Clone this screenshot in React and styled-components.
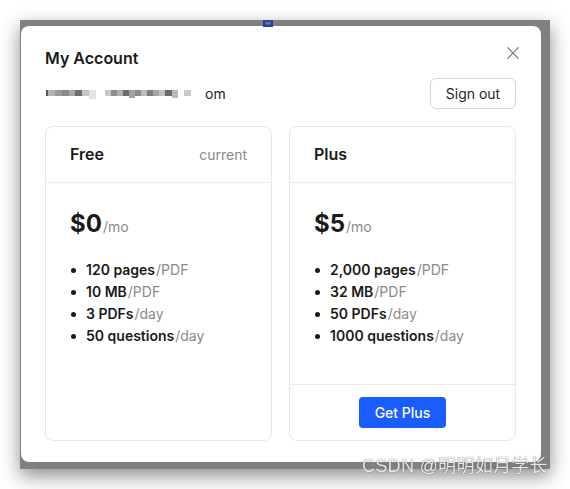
import React from 'react';
import styled, { createGlobalStyle } from 'styled-components';

const GlobalStyle = createGlobalStyle`
  html, body {
    margin: 0;
    padding: 0;
    background: #ffffff;
  }
  body {
    font-family: Inter, "Noto Sans", "Liberation Sans", sans-serif;
    color: #1f1f1f;
    -webkit-font-smoothing: antialiased;
  }
`;

const plans = [
  {
    name: 'Free',
    tag: 'current',
    price: '$0',
    features: [
      ['120 pages', '/PDF'],
      ['10 MB', '/PDF'],
      ['3 PDFs', '/day'],
      ['50 questions', '/day'],
    ],
  },
  {
    name: 'Plus',
    price: '$5',
    action: 'Get Plus',
    features: [
      ['2,000 pages', '/PDF'],
      ['32 MB', '/PDF'],
      ['50 PDFs', '/day'],
      ['1000 questions', '/day'],
    ],
  },
];

// pixelated (redacted) part of the email address
const redacted = [
  [2, '#5a5a5a'], [7, '#b4b4b4'], [7, '#9a9a9a'], [7, '#8a8a8a'], [6, '#a8a8a8'],
  [7, '#6e6e6e'], [7, '#c4c4c4'], [7, '#e2e2e2', 3], [9, 'transparent'],
  [6, '#c6c6c6'], [6, '#8e8e8e'], [6, '#b0b0b0'], [6, '#6c6c6c'], [6, '#a2a2a2', 2],
  [6, '#8a8a8a'], [6, '#bcbcbc'], [6, '#7c7c7c'], [6, '#a6a6a6'], [6, '#c2c2c2'],
  [7, '#6a6a6a'], [6, '#b8b8b8', 2], [6, 'transparent'], [7, '#cacaca'],
];

const X = () => (
  <svg width="12" height="12" viewBox="0 0 12 12">
    <path d="M0.8 0.8 L11.2 11.2 M11.2 0.8 L0.8 11.2" stroke="#8c8c8c" strokeWidth="1.4" strokeLinecap="round" />
  </svg>
);

export default function App() {
  return (
    <Stage>
      <GlobalStyle />
      <Backdrop>
        <BehindLogo width="10" height="7" viewBox="0 0 10 7">
          <path d="M1.2 0 V5.8 H8.8 V0 M3.2 0 Q5 3 6.8 0" stroke="#1f44a6" strokeWidth="2.4" fill="none" />
        </BehindLogo>
        <Modal>
          <TitleRow>
            <Title>My Account</Title>
            <CloseButton aria-label="close">
              <X />
            </CloseButton>
          </TitleRow>
          <AccountRow>
            <Email>
              <Redacted>
                {redacted.map(([w, c, drop], i) => (
                  <Cell key={i} style={{ width: w, background: c, height: 6 + (drop || 0) }} />
                ))}
              </Redacted>
              om
            </Email>
            <OutlineButton>Sign out</OutlineButton>
          </AccountRow>
          <Plans>
            {plans.map(plan => (
              <Card key={plan.name}>
                <CardHeader>
                  <PlanName>{plan.name}</PlanName>
                  {plan.tag && <PlanTag>{plan.tag}</PlanTag>}
                </CardHeader>
                <CardBody>
                  <Price>
                    {plan.price}
                    <Unit>/mo</Unit>
                  </Price>
                  <Features>
                    {plan.features.map(([strong, unit]) => (
                      <Feature key={strong}>
                        <b>{strong}</b>
                        <Unit>{unit}</Unit>
                      </Feature>
                    ))}
                  </Features>
                </CardBody>
                {plan.action && (
                  <CardFooter>
                    <PrimaryButton>{plan.action}</PrimaryButton>
                  </CardFooter>
                )}
              </Card>
            ))}
          </Plans>
        </Modal>
      </Backdrop>
      <Watermark>CSDN @明明如月学长</Watermark>
    </Stage>
  );
}

const Stage = styled.div`
  position: relative;
  width: 570px;
  height: 489px;
  padding: 20px;
  box-sizing: border-box;
`;

const Backdrop = styled.div`
  position: relative;
  width: 530px;
  height: 449px;
  box-sizing: border-box;
  padding: 6px 9px 7px 1px;
  background: #808080;
  box-shadow: 0 7px 18px rgba(0, 0, 0, 0.45);
`;

const BehindLogo = styled.svg`
  position: absolute;
  left: 243px;
  top: 0;
  display: block;
`;

const Modal = styled.div`
  height: 100%;
  box-sizing: border-box;
  background: #ffffff;
  border-radius: 8px;
  padding: 20px 25px 21px 24px;
  display: flex;
  flex-direction: column;
`;

const TitleRow = styled.div`
  display: flex;
  justify-content: space-between;
  align-items: flex-start;
`;

const Title = styled.div`
  font-size: 16px;
  line-height: 24px;
  font-weight: 600;
  color: #1a1a1a;
`;

const CloseButton = styled.button`
  border: none;
  background: none;
  padding: 0;
  margin: 1px -3px 0 0;
  width: 12px;
  height: 12px;
  display: flex;
  cursor: pointer;
`;

const AccountRow = styled.div`
  margin-top: 8px;
  display: flex;
  justify-content: space-between;
  align-items: center;
`;

const Email = styled.div`
  display: flex;
  align-items: center;
  font-size: 14px;
  line-height: 20px;
  color: #222;
`;

const Redacted = styled.div`
  display: flex;
  align-items: flex-start;
  height: 9px;
  margin: 2px 14px 0 1px;
`;

const Cell = styled.span`
  display: block;
`;

const OutlineButton = styled.button`
  font-family: inherit;
  font-size: 14px;
  color: #1f1f1f;
  background: #fff;
  border: 1px solid #d6d6d6;
  border-radius: 6px;
  height: 31px;
  width: 86px;
  padding: 0;
  cursor: pointer;
`;

const Plans = styled.div`
  margin-top: 17px;
  flex: 1;
  display: grid;
  grid-template-columns: 1fr 1fr;
  gap: 17px;
`;

const Card = styled.div`
  border: 1px solid #e8e8e8;
  border-radius: 8px;
  display: flex;
  flex-direction: column;
`;

const CardHeader = styled.div`
  display: flex;
  justify-content: space-between;
  align-items: center;
  padding: 15px 24px 16px;
  border-bottom: 1px solid #ebebeb;
`;

const PlanName = styled.div`
  font-size: 16px;
  line-height: 24px;
  font-weight: 600;
  color: #1a1a1a;
`;

const PlanTag = styled.div`
  font-size: 14px;
  color: #8a8a8a;
`;

const CardBody = styled.div`
  flex: 1;
  padding: 25px 24px 0;
`;

const Price = styled.div`
  font-size: 24px;
  line-height: 32px;
  font-weight: 700;
  color: #1a1a1a;
  display: flex;
  align-items: baseline;
`;

const Unit = styled.span`
  font-size: 14px;
  font-weight: 400;
  color: #8a8a8a;
  margin-left: 1px;
`;

const Features = styled.ul`
  list-style: none;
  margin: 16px 0 0;
  padding: 0;
`;

const Feature = styled.li`
  position: relative;
  font-size: 14px;
  line-height: 22px;
  padding-left: 16px;
  color: #1a1a1a;

  b {
    font-weight: 600;
  }

  &::before {
    content: '';
    position: absolute;
    left: 1px;
    top: 9px;
    width: 5px;
    height: 5px;
    border-radius: 50%;
    background: #1a1a1a;
  }
`;

const CardFooter = styled.div`
  border-top: 1px solid #ebebeb;
  padding: 12px;
  display: flex;
  justify-content: center;
`;

const PrimaryButton = styled.button`
  font-family: inherit;
  font-size: 14px;
  font-weight: 500;
  color: #fff;
  background: #1a5dff;
  border: none;
  border-radius: 4px;
  height: 31px;
  width: 87px;
  padding: 0;
  cursor: pointer;
`;

const Watermark = styled.div`
  position: absolute;
  left: 362px;
  top: 455px;
  font-family: "Liberation Sans", "Noto Sans CJK SC", sans-serif;
  font-size: 18px;
  line-height: 22px;
  letter-spacing: 0.3px;
  color: rgba(255, 255, 255, 0.9);
  text-shadow: 0 0 1px rgba(0, 0, 0, 0.35), 0 0 1px rgba(0, 0, 0, 0.35);
  white-space: nowrap;
`;
